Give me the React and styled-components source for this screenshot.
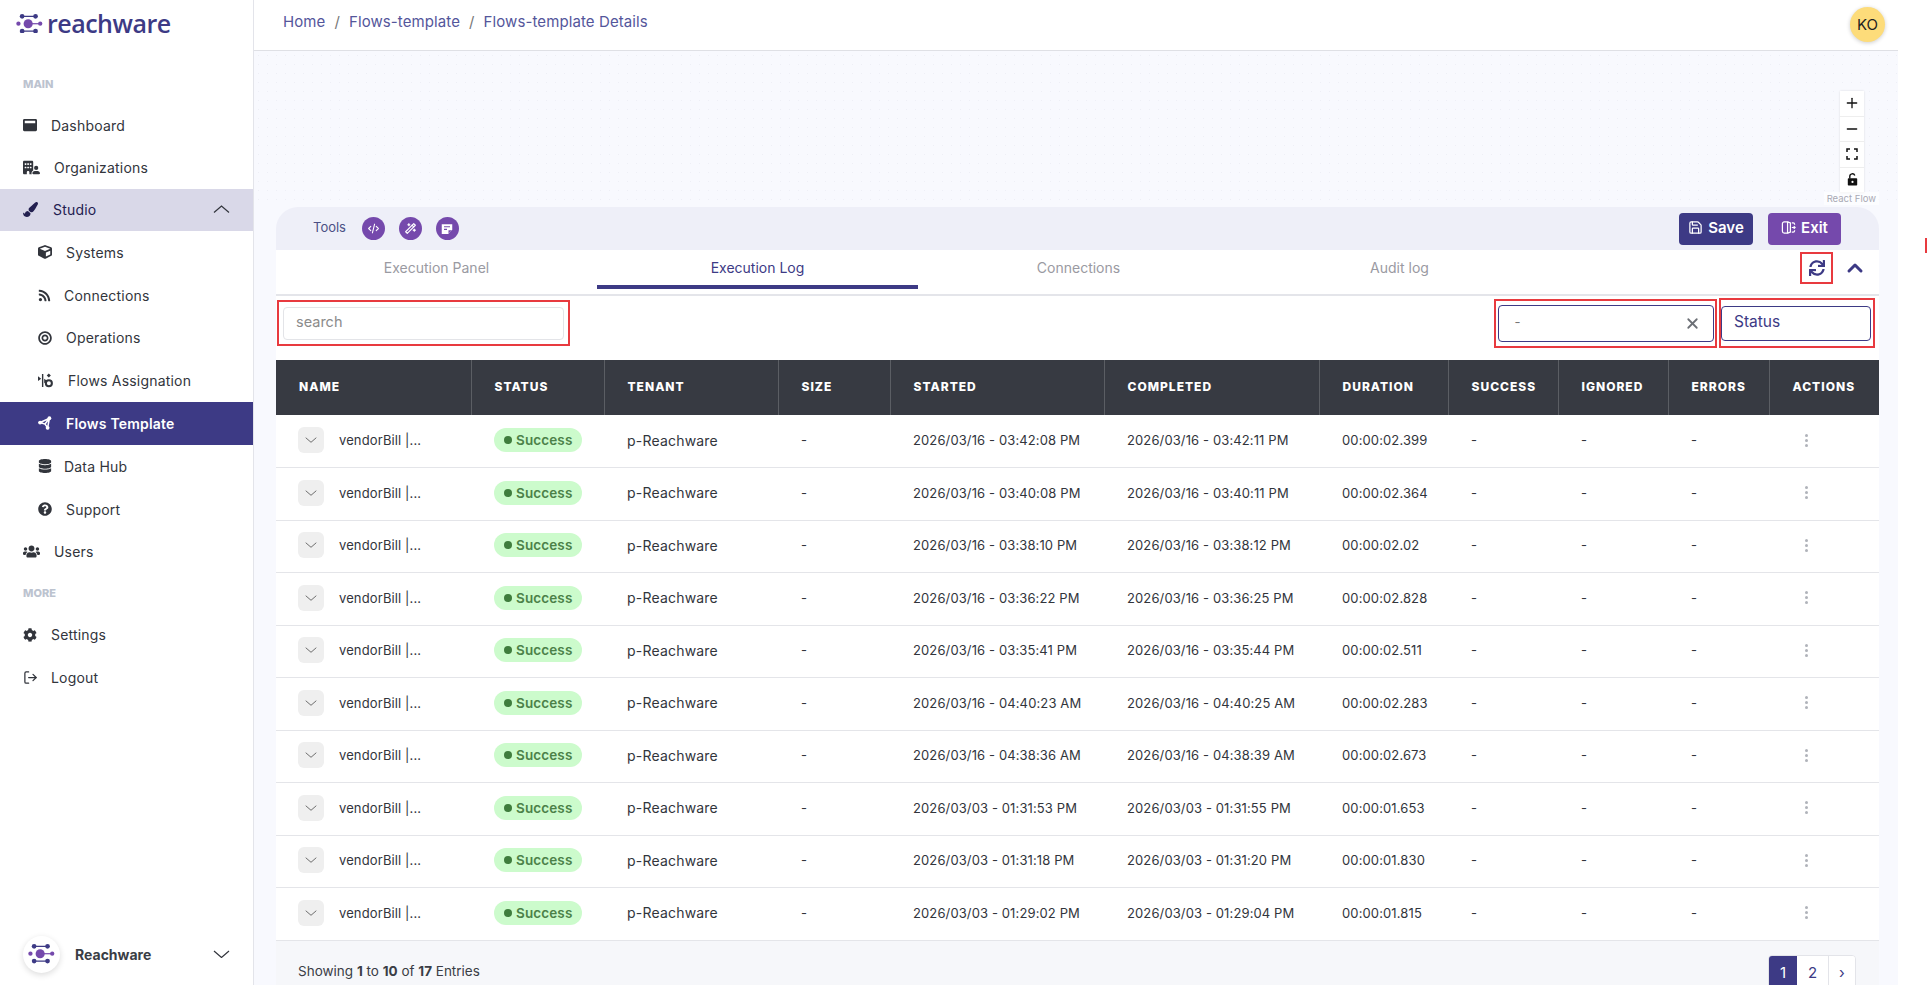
import React from 'react';
import styled, { createGlobalStyle } from 'styled-components';
import {
  FaWindowMaximize, FaPaintBrush, FaCube, FaRss, FaBullseye, FaDatabase,
  FaQuestionCircle, FaUsers, FaCog, FaSync,
} from 'react-icons/fa';
import { FaBuildingUser } from 'react-icons/fa6';
import { LuLogOut, LuSave, LuChevronUp, LuX, LuPlus, LuMinus } from 'react-icons/lu';
import { TbCode, TbWand } from 'react-icons/tb';

const GlobalStyle = createGlobalStyle`
  html, body { margin: 0; padding: 0; height: 100%; background: #fff; }
  #root { height: 100%; }
  * { box-sizing: border-box; }
  body { font-family: Inter, "Liberation Sans", sans-serif; color: #32353c; overflow: hidden; }
`;

const Page = styled.div`
  display: flex;
  height: 985px;
  overflow: hidden;
  position: relative;
`;

const Sidebar = styled.aside`
  width: 254px;
  flex: none;
  border-right: 1px solid #e3e4ea;
  display: flex;
  flex-direction: column;
`;

const LogoRow = styled.div`
  height: 50px;
  flex: none;
  padding: 0 0 3px 16px;
  display: flex;
  align-items: center;
  gap: 4px;
`;

const LogoText = styled.span`
  font-family: "Open Sans", sans-serif;
  font-size: 25px;
  font-weight: 600;
  letter-spacing: -0.5px;
  color: #3d3a85;
  line-height: 1;
`;

const SectionLabel = styled.div`
  font-size: 11px;
  font-weight: 800;
  color: #bcc3cf;
  padding: ${p => p.$top}px 0 0 23px;
  height: ${p => p.$h}px;
  flex: none;
  display: flex;
  align-items: center;
`;

const NavItem = styled.div`
  height: ${p => (p.$sub ? 42.8 : 42.3)}px;
  flex: none;
  display: flex;
  align-items: center;
  padding-left: ${p => (p.$sub ? 38 : 23)}px;
  background: ${p => (p.$active ? '#3d3a85' : p.$open ? '#d9d8e8' : 'transparent')};
  color: ${p => (p.$active ? '#fff' : p.$open ? '#232050' : '#32353c')};
  font-size: 14px;
  letter-spacing: 0.2px;
  font-weight: ${p => (p.$active ? 600 : 400)};
`;

const NavIcon = styled.span`
  width: 14px;
  flex: none;
  display: flex;
  justify-content: flex-start;
  font-size: ${p => p.$size || 14}px;
  margin-right: ${p => p.$gap}px;
  & svg { flex: none; }
`;

const NavCaret = styled.span`
  margin-left: auto;
  margin-right: ${p => p.$right}px;
  display: flex;
  color: #32353c;
`;

const SidebarFoot = styled.div`
  margin-top: auto;
  height: 60px;
  flex: none;
  padding: 0 0 2px 23px;
  display: flex;
  align-items: center;
  font-size: 14px;
  font-weight: 700;
  color: #3a3d45;
`;

const FootLogo = styled.span`
  width: 37px;
  height: 37px;
  border-radius: 50%;
  background: #fff;
  box-shadow: 0 2px 6px rgba(0, 0, 0, 0.14);
  display: flex;
  align-items: center;
  justify-content: center;
  margin-right: 15px;
`;

const Main = styled.main`
  flex: none;
  width: 1644px;
  display: flex;
  flex-direction: column;
  background: #f8f9fe;
`;

const TopBar = styled.header`
  height: 51px;
  flex: none;
  background: #fff;
  border-bottom: 1px solid #dfe0e5;
  display: flex;
  align-items: center;
  padding: 0 13px 0 29px;
`;

const Crumbs = styled.div`
  display: flex;
  margin-bottom: 7px;
  font-size: 15px;
  letter-spacing: 0.1px;
  color: #54569b;
`;

const CrumbSep = styled.span`
  margin: 0 9px;
  color: #777;
`;

const Avatar = styled.span`
  margin-left: auto;
  width: 35px;
  height: 35px;
  border-radius: 50%;
  background: #fddc7a;
  box-shadow: 0 1px 4px rgba(0, 0, 0, 0.2);
  color: #222;
  font-size: 15px;
  display: flex;
  align-items: center;
  justify-content: center;
  margin-bottom: 2px;
`;

const Canvas = styled.section`
  height: 156px;
  flex: none;
  position: relative;
  background-image: radial-gradient(#eeeff6 0.7px, transparent 0.8px);
  background-size: 9px 9px;
`;

const Controls = styled.div`
  position: absolute;
  right: 34px;
  top: 40px;
  width: 24px;
  background: #fff;
  box-shadow: 0 0 2px rgba(0, 0, 0, 0.12);
`;

const ControlBtn = styled.div`
  height: 25.5px;
  display: flex;
  align-items: center;
  justify-content: center;
  border-bottom: 1px solid #eee;
  color: #111;
  font-size: 16px;
`;

const Attribution = styled.span`
  position: absolute;
  right: 19px;
  bottom: 2px;
  font-size: 9.5px;
  line-height: 13px;
  padding: 0 3px;
  color: #a9a9b4;
  background: rgba(255, 255, 255, 0.6);
`;

const Panel = styled.section`
  margin: 0 19px 0 22px;
  flex: 1;
  display: flex;
  flex-direction: column;
  min-height: 0;
`;

const ToolBar = styled.div`
  height: 43px;
  flex: none;
  background: #eeeff8;
  border-radius: 22px 22px 0 0;
  display: flex;
  align-items: center;
  padding: 0 38px 0 37px;
`;

const ToolLabel = styled.span`
  font-size: 13px;
  color: #4b4f85;
  margin: 0 16px 3px 0;
`;

const ToolBtn = styled.span`
  width: 23px;
  height: 23px;
  border-radius: 50%;
  background: #7549ac;
  color: #fff;
  font-size: 13px;
  display: flex;
  align-items: center;
  justify-content: center;
  margin-right: 14px;
`;

const ActionBtn = styled.button`
  height: 32px;
  border: 0;
  border-radius: 4px;
  background: ${p => (p.$exit ? '#7549ac' : '#3d3a85')};
  width: ${p => (p.$exit ? 73 : 74)}px;
  margin-left: ${p => (p.$exit ? '15px' : 'auto')};
  padding: 0 0 2px;
  color: #fff;
  font-family: inherit;
  font-size: 15px;
  font-weight: 600;
  display: flex;
  align-items: center;
  justify-content: center;
  gap: 5px;
`;

const Tabs = styled.nav`
  height: 46px;
  flex: none;
  background: #fff;
  border-bottom: 2px solid #e4e5ea;
  display: flex;
  align-items: stretch;
`;

const Tab = styled.div`
  width: 321px;
  display: flex;
  align-items: center;
  justify-content: center;
  padding-bottom: 9px;
  font-size: 14px;
  color: ${p => (p.$active ? '#3d3a85' : '#9a9aa2')};
  position: relative;
  &::after {
    content: '';
    display: ${p => (p.$active ? 'block' : 'none')};
    position: absolute;
    left: 0;
    right: 0;
    bottom: 5px;
    height: 4px;
    background: #3d3a85;
  }
`;

const TabTools = styled.div`
  margin-left: auto;
  display: flex;
  align-items: center;
  padding: 0 12px 9px 0;
  gap: 10px;
`;

const Mark = styled.div`
  border: 2px solid #e83a3f;
  display: flex;
  align-items: center;
  justify-content: center;
`;

const RefreshMark = styled(Mark)`
  width: 33px;
  height: 32px;
  font-size: 16px;
  color: #3d3a85;
`;

const Collapse = styled.span`
  display: flex;
  font-size: 24px;
  color: #3d3a85;
  & svg { stroke-width: 3; }
`;

const FilterRow = styled.div`
  height: 64px;
  flex: none;
  background: #fff;
  display: flex;
  align-items: center;
  padding: 0 4px 10px 1px;
`;

const SearchMark = styled(Mark)`
  width: 293px;
  height: 46px;
`;

const SearchInput = styled.div`
  width: 281px;
  height: 33px;
  border: 1px solid #e3e4e8;
  border-radius: 4px;
  padding: 0 0 3px 12px;
  display: flex;
  align-items: center;
  font-size: 14.5px;
  color: #8b8b8b;
`;

const RangeMark = styled(Mark)`
  margin-left: auto;
  width: 223px;
  height: 49px;
`;

const RangeInput = styled.div`
  width: 216px;
  height: 37px;
  border: 1px solid #3d3a85;
  border-radius: 4px;
  padding: 0 12px 3px 16px;
  display: flex;
  align-items: center;
  justify-content: space-between;
  font-size: 13px;
  color: #777;
`;

const ClearBtn = styled.span`
  display: flex;
  font-size: 17px;
  color: #6c6f75;
  margin-top: 3px;
  & svg { stroke-width: 2.5; }
`;

const StatusMark = styled(Mark)`
  margin-left: 2px;
  width: 156px;
  height: 50px;
  justify-content: flex-start;
`;

const StatusInput = styled.div`
  width: 150px;
  height: 35px;
  border: 1px solid #3d3a85;
  border-radius: 4px;
  padding: 0 0 3px 12px;
  display: flex;
  align-items: center;
  font-size: 15.5px;
  color: #3d3a85;
`;

const Table = styled.table`
  width: 1603px;
  flex: none;
  border-collapse: collapse;
  table-layout: fixed;
  background: #fff;
`;

const Th = styled.th`
  height: 55px;
  padding: 0 0 2px 23px;
  text-align: left;
  background: #373a42;
  color: #fff;
  font-size: 12px;
  font-weight: 800;
  letter-spacing: 1px;
  text-transform: uppercase;
  border-right: 1px solid #5b5e64;
  &:last-child { border-right: 0; }
`;

const Td = styled.td`
  height: 52.5px;
  padding: 0 0 2px ${p => p.$pad || 23}px;
  border-bottom: 1px solid #e4e5e9;
  font-size: 13px;
  letter-spacing: 0.12px;
  color: #32353c;
  white-space: nowrap;
`;

const TenantCell = styled(Td)`
  font-size: 14px;
  letter-spacing: 0.2px;
`;

const NameCell = styled.div`
  display: flex;
  align-items: center;
  gap: 15px;
`;

const ExpandBtn = styled.span`
  width: 26px;
  height: 26px;
  border-radius: 6px;
  background: #efefef;
  display: flex;
  align-items: center;
  justify-content: center;
  color: #555;
`;

const Badge = styled.span`
  display: inline-flex;
  align-items: center;
  gap: 4px;
  height: 24px;
  width: 88px;
  padding-left: 10px;
  border-radius: 12px;
  background: #ccfbcc;
  color: #4b8148;
  font-size: 13.5px;
  font-weight: 600;
  &::before {
    content: '';
    width: 8px;
    height: 8px;
    border-radius: 50%;
    background: #3f7d3d;
  }
`;

const Kebab = styled.span`
  display: flex;
  flex-direction: column;
  gap: 2px;
  margin-left: 13px;
  width: 3px;
  & i {
    display: block;
    width: 3px;
    height: 3px;
    border-radius: 50%;
    background: #b0b3ba;
  }
`;

const Footer = styled.footer`
  flex: 1;
  background: #f6f7fa;
  display: flex;
  align-items: flex-start;
  justify-content: space-between;
  padding: 14px 23px 0 22px;
  font-size: 13.5px;
  color: #3a3d45;
  & b { font-weight: 700; }
`;

const Showing = styled.span`
  padding-top: 8px;
`;

const Pager = styled.div`
  display: flex;
  height: 40px;
  border: 1px solid #e3e4e9;
  border-radius: 4px;
  background: #fff;
  overflow: hidden;
`;

const PageBtn = styled.span`
  width: ${p => p.$w}px;
  display: flex;
  justify-content: center;
  padding-top: 7px;
  font-size: 15px;
  background: ${p => (p.$active ? '#3d3a85' : '#fff')};
  color: ${p => (p.$active ? '#fff' : '#3d3a85')};
  border-left: ${p => (p.$sep ? '1px solid #e3e4e9' : '0')};
`;

const EdgeMark = styled.span`
  position: absolute;
  right: 0;
  top: 238px;
  width: 2px;
  height: 15px;
  background: #e83a3f;
`;

const ReachMark = ({ size = 30 }) => (
  <svg width={size} height={size * 0.72} viewBox="0 0 40 29">
    <path d="M9 3.5h20M9 25.5h20" stroke="#3d3a85" strokeWidth="1.8" />
    <circle cx="9" cy="3.5" r="3.5" fill="#3d3a85" />
    <circle cx="29" cy="3.5" r="3.5" fill="#3d3a85" />
    <circle cx="9" cy="25.5" r="3.5" fill="#3d3a85" />
    <circle cx="29" cy="25.5" r="3.5" fill="#3d3a85" />
    <path d="M17 14.5h19" stroke="#7549ac" strokeWidth="1.8" />
    <circle cx="3.5" cy="14.5" r="3.2" fill="#7549ac" />
    <circle cx="18" cy="14.5" r="6.8" fill="#7549ac" />
    <circle cx="36" cy="14.5" r="3.2" fill="#7549ac" />
  </svg>
);

const ThinChevron = ({ down, width = 17 }) => (
  <svg width={width} height={width * 0.5} viewBox="0 0 17 8.5" fill="none" stroke="currentColor" strokeWidth="1.2">
    <path d={down ? 'M1 1l7.5 6.5L16 1' : 'M1 7.5L8.5 1 16 7.5'} />
  </svg>
);

const AssignIcon = () => (
  <svg width="15" height="15" viewBox="0 0 16 16" fill="#32353c">
    <path d="M4.2 1h1.5v14H4.2zM0 3.5l3.4 2.5L0 8.5zM6.6 6l3.4 2.5L6.6 11z" />
    <path d="M11.5 0.5l2.2 2.2-2.2 2.2-2.2-2.2z" />
    <circle cx="11.6" cy="11" r="3.2" fill="none" stroke="#32353c" strokeWidth="2.2" />
  </svg>
);

const TemplateIcon = () => (
  <svg width="14" height="14" viewBox="0 0 16 16" fill="none" stroke="#fff" strokeWidth="1.8">
    <path d="M2.4 7.5L13 2.6 11 13.5 8 9.2zM8 9.2L13 2.6" />
    <circle cx="2.4" cy="7.5" r="2.2" fill="#fff" stroke="none" />
    <circle cx="13" cy="2.6" r="2.2" fill="#fff" stroke="none" />
    <circle cx="11" cy="13.5" r="2.2" fill="#fff" stroke="none" />
  </svg>
);

const NoteIcon = () => (
  <svg width="12" height="12" viewBox="0 0 16 16">
    <path d="M1 1.5h14v7.5l-5.5 5.5H1z" fill="#fff" />
    <path d="M4 5h8M4 8.5h4" stroke="#7549ac" strokeWidth="1.5" />
    <path d="M10 14v-4.5h4.5" fill="#7549ac" />
  </svg>
);

const ExitIcon = () => (
  <svg width="15" height="15" viewBox="0 0 16 16" fill="none" stroke="#fff" strokeWidth="1.3">
    <path d="M7 2H3.5a2 2 0 0 0-2 2v8a2 2 0 0 0 2 2H7z" />
    <path d="M7 2l3 1.2v9.6L7 14" />
    <path d="M11.5 3h1.5a1.5 1.5 0 0 1 1.5 1.5V5M14.5 11v.5A1.5 1.5 0 0 1 13 13h-1.5M11.5 8h3.5M13.6 6.6L15 8l-1.4 1.4" />
  </svg>
);

const FitIcon = () => (
  <svg width="12" height="12" viewBox="0 0 12 12" fill="none" stroke="#111" strokeWidth="1.5">
    <path d="M1 4V1h3M8 1h3v3M11 8v3H8M4 11H1V8" />
  </svg>
);

const OpenLockIcon = () => (
  <svg width="11" height="13" viewBox="0 0 11 13">
    <path d="M2.8 5.5V3.4a2.6 2.6 0 0 1 5-1" fill="none" stroke="#111" strokeWidth="1.4" />
    <rect x="0.8" y="5.2" width="9.4" height="7.4" rx="0.8" fill="#111" />
    <circle cx="5.5" cy="8.9" r="1.1" fill="#fff" />
  </svg>
);

const COLUMNS = [
  ['Name', 195], ['Status', 133], ['Tenant', 174], ['Size', 112], ['Started', 214], ['Completed', 215],
  ['Duration', 129], ['Success', 110], ['Ignored', 110], ['Errors', 101], ['Actions', 110],
];

const ROWS = [
  ['2026/03/16 - 03:42:08 PM', '2026/03/16 - 03:42:11 PM', '00:00:02.399'],
  ['2026/03/16 - 03:40:08 PM', '2026/03/16 - 03:40:11 PM', '00:00:02.364'],
  ['2026/03/16 - 03:38:10 PM', '2026/03/16 - 03:38:12 PM', '00:00:02.02'],
  ['2026/03/16 - 03:36:22 PM', '2026/03/16 - 03:36:25 PM', '00:00:02.828'],
  ['2026/03/16 - 03:35:41 PM', '2026/03/16 - 03:35:44 PM', '00:00:02.511'],
  ['2026/03/16 - 04:40:23 AM', '2026/03/16 - 04:40:25 AM', '00:00:02.283'],
  ['2026/03/16 - 04:38:36 AM', '2026/03/16 - 04:38:39 AM', '00:00:02.673'],
  ['2026/03/03 - 01:31:53 PM', '2026/03/03 - 01:31:55 PM', '00:00:01.653'],
  ['2026/03/03 - 01:31:18 PM', '2026/03/03 - 01:31:20 PM', '00:00:01.830'],
  ['2026/03/03 - 01:29:02 PM', '2026/03/03 - 01:29:04 PM', '00:00:01.815'],
];

export default function App() {
  return (
    <Page>
      <GlobalStyle />
      <Sidebar>
        <LogoRow>
          <ReachMark size={27} />
          <LogoText>reachware</LogoText>
        </LogoRow>
        <SectionLabel $h={54} $top={14}>MAIN</SectionLabel>
        <NavItem><NavIcon $gap={14}><FaWindowMaximize /></NavIcon>Dashboard</NavItem>
        <NavItem><NavIcon $gap={17} $size={17}><FaBuildingUser /></NavIcon>Organizations</NavItem>
        <NavItem $open><NavIcon $gap={16} $size={15}><FaPaintBrush /></NavIcon>Studio<NavCaret $right={23}><ThinChevron /></NavCaret></NavItem>
        <NavItem $sub><NavIcon $gap={14}><FaCube /></NavIcon>Systems</NavItem>
        <NavItem $sub><NavIcon $gap={12} $size={13}><FaRss /></NavIcon>Connections</NavItem>
        <NavItem $sub><NavIcon $gap={14}><FaBullseye /></NavIcon>Operations</NavItem>
        <NavItem $sub><NavIcon $gap={16}><AssignIcon /></NavIcon>Flows Assignation</NavItem>
        <NavItem $sub $active><NavIcon $gap={14}><TemplateIcon /></NavIcon>Flows Template</NavItem>
        <NavItem $sub><NavIcon $gap={12}><FaDatabase /></NavIcon>Data Hub</NavItem>
        <NavItem $sub><NavIcon $gap={14}><FaQuestionCircle /></NavIcon>Support</NavItem>
        <NavItem><NavIcon $gap={17} $size={17}><FaUsers /></NavIcon>Users</NavItem>
        <SectionLabel $h={41} $top={0}>MORE</SectionLabel>
        <NavItem><NavIcon $gap={14}><FaCog /></NavIcon>Settings</NavItem>
        <NavItem><NavIcon $gap={14} $size={15}><LuLogOut /></NavIcon>Logout</NavItem>
        <SidebarFoot>
          <FootLogo><ReachMark size={27} /></FootLogo>
          Reachware
          <NavCaret $right={23}><ThinChevron down /></NavCaret>
        </SidebarFoot>
      </Sidebar>
      <Main>
        <TopBar>
          <Crumbs>
            <span>Home</span><CrumbSep>/</CrumbSep>
            <span>Flows-template</span><CrumbSep>/</CrumbSep>
            <span>Flows-template Details</span>
          </Crumbs>
          <Avatar>KO</Avatar>
        </TopBar>
        <Canvas>
          <Controls>
            <ControlBtn><LuPlus /></ControlBtn>
            <ControlBtn><LuMinus /></ControlBtn>
            <ControlBtn><FitIcon /></ControlBtn>
            <ControlBtn><OpenLockIcon /></ControlBtn>
          </Controls>
          <Attribution>React Flow</Attribution>
        </Canvas>
        <Panel>
          <ToolBar>
            <ToolLabel>Tools</ToolLabel>
            <ToolBtn><TbCode /></ToolBtn>
            <ToolBtn><TbWand /></ToolBtn>
            <ToolBtn><NoteIcon /></ToolBtn>
            <ActionBtn><LuSave />Save</ActionBtn>
            <ActionBtn $exit><ExitIcon />Exit</ActionBtn>
          </ToolBar>
          <Tabs>
            <Tab>Execution Panel</Tab>
            <Tab $active>Execution Log</Tab>
            <Tab>Connections</Tab>
            <Tab>Audit log</Tab>
            <TabTools>
              <RefreshMark><FaSync /></RefreshMark>
              <Collapse><LuChevronUp /></Collapse>
            </TabTools>
          </Tabs>
          <FilterRow>
            <SearchMark><SearchInput>search</SearchInput></SearchMark>
            <RangeMark>
              <RangeInput>-<ClearBtn><LuX /></ClearBtn></RangeInput>
            </RangeMark>
            <StatusMark><StatusInput>Status</StatusInput></StatusMark>
          </FilterRow>
          <Table>
            <colgroup>
              {COLUMNS.map(([name, w]) => <col key={name} width={w} />)}
            </colgroup>
            <thead>
              <tr>
                {COLUMNS.map(([name]) => <Th key={name}>{name}</Th>)}
              </tr>
            </thead>
            <tbody>
              {ROWS.map((r, i) => (
                <tr key={i}>
                  <Td $pad={22}><NameCell><ExpandBtn><ThinChevron down width={12} /></ExpandBtn>vendorBill |...</NameCell></Td>
                  <Td><Badge>Success</Badge></Td>
                  <TenantCell>p-Reachware</TenantCell>
                  <Td>-</Td>
                  <Td>{r[0]}</Td>
                  <Td>{r[1]}</Td>
                  <Td>{r[2]}</Td>
                  <Td>-</Td>
                  <Td>-</Td>
                  <Td>-</Td>
                  <Td><Kebab><i /><i /><i /></Kebab></Td>
                </tr>
              ))}
            </tbody>
          </Table>
          <Footer>
            <Showing>Showing <b>1</b> to <b>10</b> of <b>17</b> Entries</Showing>
            <Pager>
              <PageBtn $w={28} $active>1</PageBtn>
              <PageBtn $w={31}>2</PageBtn>
              <PageBtn $w={27} $sep>›</PageBtn>
            </Pager>
          </Footer>
        </Panel>
      </Main>
      <EdgeMark />
    </Page>
  );
}
